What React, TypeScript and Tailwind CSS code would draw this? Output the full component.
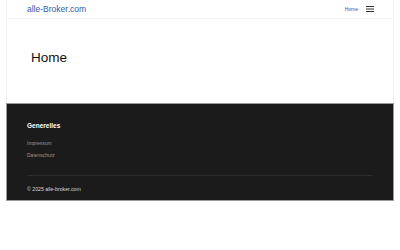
import React from "react";

export default function App() {
  return (
    <div className="bg-white w-[400px] h-[250px] overflow-hidden" style={{ fontFamily: '"Liberation Sans", Arial, sans-serif' }}>
      <div className="mx-[6px] border-x border-[#f0f0f0]">
        <header className="h-[19px] border-b border-[#f2f2f2] flex items-center justify-between pl-[20px] pr-[19px]">
          <span className="text-[8.5px] leading-none text-[#2b5bb0]">alle-Broker.com</span>
          <div className="flex items-center gap-[8px]">
            <span className="text-[5px] leading-none text-[#2b5bb0]">Home</span>
            <svg width="8" height="6" viewBox="0 0 8 6">
              <rect x="0" y="0" width="8" height="1" fill="#333" />
              <rect x="0" y="2.5" width="8" height="1" fill="#333" />
              <rect x="0" y="5" width="8" height="1" fill="#333" />
            </svg>
          </div>
        </header>
        <main className="h-[84px] flex items-center pl-[24px] pb-[6px]">
          <h1 className="text-[13.5px] leading-none text-[#111]">Home</h1>
        </main>
      </div>
      <footer className="mx-[6px] h-[98px] bg-[#1b1b1b] border border-[#9a9a9a] pl-[20px] pr-[21px] pt-[19px]">
        <div className="text-[6.5px] font-bold text-white leading-none">Generelles</div>
        <div className="mt-[11px] text-[5px] text-[#9a9a9a] leading-none">Impressum</div>
        <div className="mt-[7px] text-[5px] text-[#9a9a9a] leading-none">Datenschutz</div>
        <div className="mt-[17px] ml-[1px] border-t border-[#2c2c2c]"></div>
        <div className="mt-[11px] text-[5.2px] text-[#d8d8d8] leading-none">© 2025 alle-broker.com</div>
      </footer>
    </div>
  );
}
